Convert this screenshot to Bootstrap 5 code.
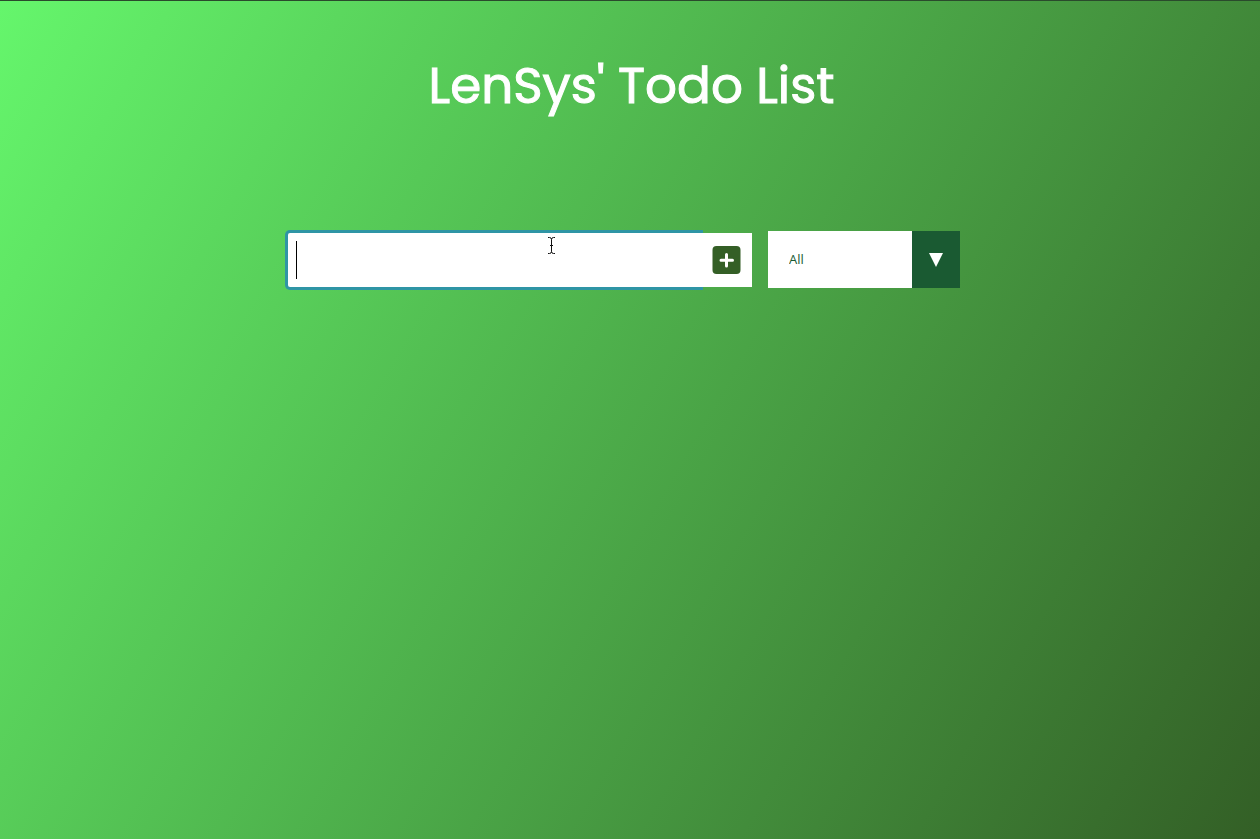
<!DOCTYPE html>
<html lang="en">
<head>
<meta charset="utf-8">
<meta name="viewport" content="width=device-width, initial-scale=1">
<title>LenSys' Todo List</title>
<link href="https://cdn.jsdelivr.net/npm/bootstrap@5.3.0/dist/css/bootstrap.min.css" rel="stylesheet">
<style>
body {
  font-family: Poppins, Inter, sans-serif;
  background: linear-gradient(120deg, #65f66c, #335f26);
  border-top: 1px solid #2a4a2c;
}
header { padding: 47px 0 108px 3px; }
header h1 { font-size: 50px; line-height: 75px; -webkit-text-stroke: 1px #fff; }
form { padding-right: 12px; }
.todo-entry { flex: 0 1 464px; }
.todo-input { height: 54px; padding: 8px; font-size: 28px; caret-color: transparent; }
.todo-input, .todo-input:focus { outline: 0; border: 0; border-radius: 2px 0 0 2px; box-shadow: 0 0 0 3px #2f95a5; }
.todo-add { width: 52px; height: 54px; padding: 0; background: #fff; z-index: 2; }
.todo-add::before { content: ""; position: absolute; left: -3px; top: 0; bottom: 0; width: 3px; background: #fff; }
.caret-bar { width: 1px; height: 38px; left: 8px; top: 8px; background: #000; z-index: 6; }
.pointer { left: 258px; top: 4px; z-index: 6; }
.todo-filter { flex: 0 0 192px; height: 57px; }
.todo-filter select { appearance: none; padding: 0 68px 0 21px; font-family: "Open Sans", sans-serif; font-size: 13px; color: #1a5a32; background: #fff; outline: 0; }
.filter-arrow { width: 48px; background: #1a5a32; pointer-events: none; }
</style>
</head>
<body class="min-vh-100">
<header class="text-center text-white">
  <h1 class="fw-normal m-0">LenSys' Todo List</h1>
</header>
<form class="d-flex justify-content-center align-items-center gap-3">
  <div class="todo-entry d-flex position-relative">
    <input type="text" class="todo-input form-control rounded-end-0" aria-label="New todo" autocomplete="off">
    <span class="caret-bar position-absolute" aria-hidden="true"></span>
    <svg class="pointer position-absolute" width="11" height="17" viewBox="0 0 11 17" fill="none" stroke="#111" aria-hidden="true">
      <path d="M2 .5h1.5q2 0 2 2v12q0 2-2 2H2M9 .5H7.500q-2 0-2 2M9 16.500H7.500q-2 0-2-2M4 8.500h3"/>
    </svg>
    <button type="button" class="todo-add btn border-0 rounded-0 flex-shrink-0 d-flex align-items-center justify-content-center position-relative" aria-label="Add todo">
      <svg width="30" height="30" viewBox="0 0 30 30" aria-hidden="true">
        <rect x="1.500" y="1" width="28" height="28" rx="4" fill="#345f26"/>
        <path d="M15.500 9.500v11.500M10 15.200h11.500" stroke="#fff" stroke-width="3" stroke-linecap="round"/>
      </svg>
    </button>
  </div>
  <div class="todo-filter position-relative">
    <select class="w-100 h-100 border-0 rounded-0" aria-label="Filter todos">
      <option>All</option>
      <option>Completed</option>
      <option>Uncompleted</option>
    </select>
    <span class="filter-arrow position-absolute top-0 end-0 h-100 d-flex align-items-center justify-content-center" aria-hidden="true">
      <svg width="14" height="14" viewBox="0 0 14 14"><path d="M0 0h14L7 14z" fill="#fff"/></svg>
    </span>
  </div>
</form>
<script src="https://cdn.jsdelivr.net/npm/bootstrap@5.3.0/dist/js/bootstrap.bundle.min.js"></script>
</body>
</html>
